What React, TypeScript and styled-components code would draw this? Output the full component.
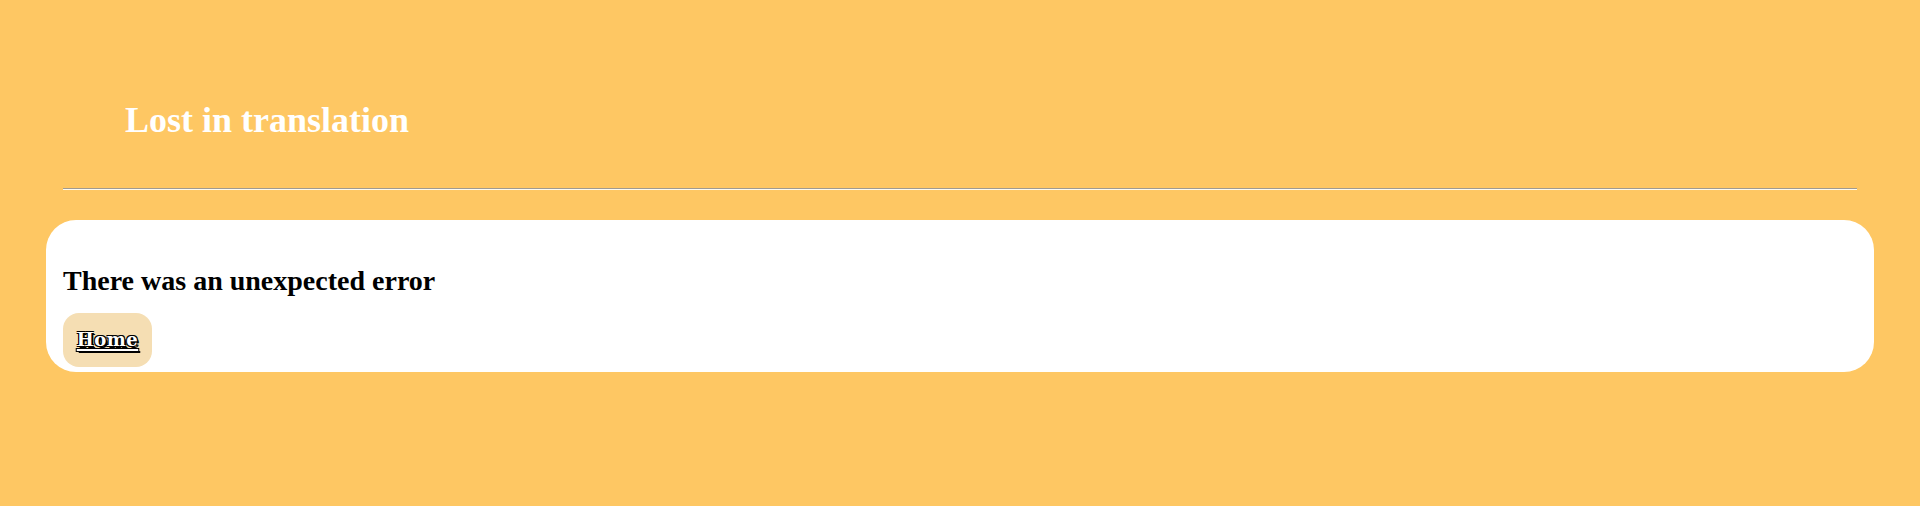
import React from "react";
import styled, { createGlobalStyle } from "styled-components";

const GlobalStyle = createGlobalStyle`
  html, body {
    margin: 0;
    padding: 0;
    background: #fec763;
    font-family: "Liberation Serif", "Times New Roman", serif;
  }
`;

const Page = styled.div`
  min-height: 506px;
  background: #fec763;
  padding: 0 46px;
  box-sizing: border-box;
  display: flow-root;
`;

const Header = styled.header`
  padding: 100px 17px 0;
`;

const Title = styled.h1`
  margin: 0 0 0 62px;
  font-size: 36px;
  line-height: 40px;
  font-weight: bold;
  color: #ffffff;
`;

const Divider = styled.hr`
  margin: 48px 0 0;
  height: 0;
  border: 0;
  border-top: 1px solid #a09a90;
  border-bottom: 1px solid #fffbef;
`;

const Card = styled.main`
  margin-top: 30px;
  background: #ffffff;
  border-radius: 30px;
  padding: 45px 17px 5px;
  height: 152px;
  box-sizing: border-box;
`;

const ErrorTitle = styled.h2`
  margin: 0;
  font-size: 28px;
  line-height: 31px;
  font-weight: bold;
  color: #000000;
`;

const HomeButton = styled.a`
  margin-top: 17px;
  display: inline-flex;
  align-items: center;
  justify-content: center;
  width: 89px;
  height: 54px;
  box-sizing: border-box;
  padding-bottom: 2px;
  background: #f5deb3;
  border-radius: 16px;
  font-family: "DejaVu Serif", "Liberation Serif", serif;
  font-size: 18px;
  font-weight: bold;
  letter-spacing: 0.5px;
  color: #ffffff;
  text-decoration: underline;
  text-decoration-thickness: 2px;
  text-underline-offset: 3px;
  text-shadow: -1px -1px 0 #000, 1px -1px 0 #000, -1px 1px 0 #000,
    1px 1px 0 #000, 2px 2px 0 #000;
  cursor: pointer;
`;

export default function App() {
  return (
    <>
      <GlobalStyle />
      <Page>
        <Header>
          <Title>Lost in translation</Title>
          <Divider />
        </Header>
        <Card>
          <ErrorTitle>There was an unexpected error</ErrorTitle>
          <HomeButton href="#">Home</HomeButton>
        </Card>
      </Page>
    </>
  );
}
